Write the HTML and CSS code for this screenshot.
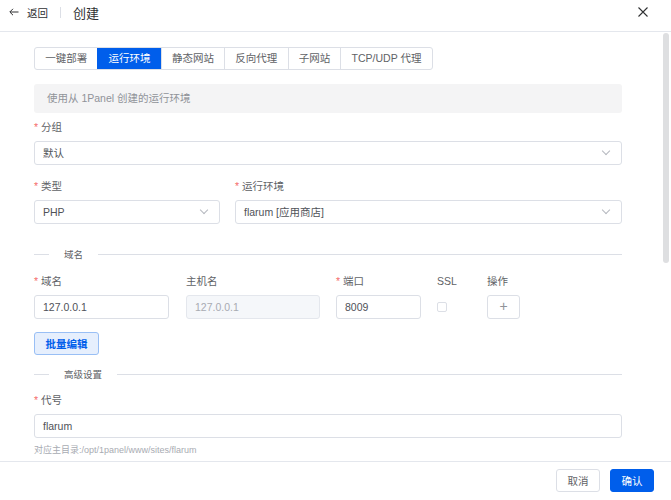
FILE: index.html
```html
<!DOCTYPE html>
<html lang="zh-CN">
<head>
    <meta charset="UTF-8">
    <meta name="viewport" content="width=device-width, initial-scale=1.0">
    <title>创建网站</title>
    <link rel="stylesheet" href="styles.css">
</head>
<body>

    <div class="drawer">
        <header class="drawer-header">
            <span class="back">
                <svg width="10" height="8" viewBox="0 0 10 8"><path d="M9.5 4H1M4 0.8L0.8 4L4 7.2" fill="none" stroke="#303133" stroke-width="1"/></svg>
                返回
            </span>
            <span class="sep"></span>
            <span class="title">创建</span>
            <svg class="close" width="10" height="10" viewBox="0 0 10 10"><path d="M0.5 0.5L9.5 9.5M9.5 0.5L0.5 9.5" stroke="#303133" stroke-width="1.1"/></svg>
        </header>

        <main class="drawer-body">
            <div class="tabs">
                <span class="tab">一键部署</span>
                <span class="tab active">运行环境</span>
                <span class="tab">静态网站</span>
                <span class="tab">反向代理</span>
                <span class="tab">子网站</span>
                <span class="tab">TCP/UDP 代理</span>
            </div>

            <div class="alert">使用从 1Panel 创建的运行环境</div>

            <div class="field first">
                <label class="label required">分组</label>
                <div class="select">默认</div>
            </div>

            <div class="field-row">
                <div class="field">
                    <label class="label required">类型</label>
                    <div class="select">PHP</div>
                </div>
                <div class="field">
                    <label class="label required">运行环境</label>
                    <div class="select">flarum [应用商店]</div>
                </div>
            </div>

            <div class="divider divider-domain"><span>域名</span></div>

            <div class="domain-row">
                <label class="label required">域名</label>
                <label class="label">主机名</label>
                <label class="label required">端口</label>
                <label class="label">SSL</label>
                <label class="label">操作</label>

                <div class="input w-domain">127.0.0.1</div>
                <div class="input disabled w-host">127.0.0.1</div>
                <div class="input w-port">8009</div>
                <div class="cell"><span class="checkbox"></span></div>
                <div class="cell"><span class="btn-icon">+</span></div>
            </div>

            <button class="btn-plain">批量编辑</button>

            <div class="divider divider-adv"><span>高级设置</span></div>

            <div class="field code-field">
                <label class="label required">代号</label>
                <div class="input">flarum</div>
            </div>
            <div class="help">对应主目录:/opt/1panel/www/sites/flarum</div>

            <div class="scroll-thumb"></div>
        </main>

        <footer class="drawer-footer">
            <button class="btn">取消</button>
            <button class="btn primary">确认</button>
        </footer>
    </div>

</body>
</html>
```

FILE: styles.css
```css
body {
    margin: 0;
    background-color: #ffffff;
    font-family: "Liberation Sans", "Noto Sans CJK SC", sans-serif;
    color: #606266;
}
.drawer {
    display: flex;
    flex-direction: column;
    height: 500px;
}

/* header */
.drawer-header {
    display: flex;
    align-items: center;
    height: 24px;
    padding: 0 0 7px 9px;
    border-bottom: 1px solid #e4e7ed;
}
.back {
    display: flex;
    align-items: center;
    gap: 8px;
    font-size: 10.5px;
    color: #303133;
}
.sep {
    width: 1px;
    height: 11px;
    background-color: #dcdfe6;
    margin: 0 12px 0 12px;
}
.title {
    font-size: 13px;
    color: #303133;
}
.close {
    margin-left: auto;
    margin-right: 23px;
}

/* body */
.drawer-body {
    flex: 1;
    position: relative;
    overflow: hidden;
    padding: 15px 49px 0 34px;
}
.scroll-thumb {
    position: absolute;
    top: 1px;
    right: 2px;
    width: 6px;
    height: 230px;
    border-radius: 3px;
    background-color: #dedfe1;
}

.tabs {
    display: inline-flex;
    border: 1px solid #dcdfe6;
    border-radius: 3px;
    overflow: hidden;
}
.tab {
    line-height: 21px;
    padding: 0 10.2px;
    font-size: 10.5px;
    color: #606266;
    border-left: 1px solid #dcdfe6;
}
.tab:first-child {
    border-left: none;
}
.tab.active {
    background-color: #005eeb;
    border-left-color: #005eeb;
    color: #ffffff;
}

.alert {
    margin-top: 14px;
    height: 29px;
    line-height: 29px;
    padding: 0 13px;
    border-radius: 3px;
    background-color: #f4f4f5;
    font-size: 10.5px;
    color: #909399;
}

.field.first {
    margin-top: 4px;
}
.field-row {
    display: grid;
    grid-template-columns: 186px 1fr;
    gap: 15px;
    margin-top: 11px;
}
.label {
    display: block;
    line-height: 20px;
    margin-bottom: 4px;
    font-size: 10.5px;
    color: #606266;
}
.label.required::before {
    content: "*";
    color: #f56c6c;
    margin-right: 3px;
}

.select,
.input {
    box-sizing: border-box;
    height: 24px;
    line-height: 22px;
    padding: 0 8px;
    border: 1px solid #dcdfe6;
    border-radius: 3px;
    font-size: 10.5px;
    color: #4f5258;
    background-color: #ffffff;
}
.select {
    position: relative;
}
.select::after {
    content: "";
    position: absolute;
    right: 12px;
    top: 6px;
    width: 5px;
    height: 5px;
    border-right: 1px solid #b5b8bf;
    border-bottom: 1px solid #b5b8bf;
    transform: rotate(45deg);
}
.input.disabled {
    background-color: #f5f7fa;
    border-color: #e4e7ed;
    color: #a8abb2;
}

.divider {
    display: flex;
    align-items: center;
    height: 14px;
    font-size: 9.5px;
    color: #606266;
}
.divider::before {
    content: "";
    width: 15px;
    height: 1px;
    background-color: #dcdfe6;
}
.divider::after {
    content: "";
    flex: 1;
    height: 1px;
    background-color: #dcdfe6;
}
.divider span {
    padding: 0 15px;
}
.divider-domain {
    margin-top: 23px;
}
.divider-adv {
    margin-top: 12px;
}

.domain-row {
    display: grid;
    grid-template-columns: 152px 150px 101px 50px auto;
    margin-top: 10px;
}
.w-domain { width: 135px; }
.w-host { width: 134px; }
.w-port { width: 85px; }
.cell {
    display: flex;
    align-items: center;
    height: 24px;
}
.checkbox {
    box-sizing: border-box;
    width: 10px;
    height: 10px;
    border: 1px solid #dcdfe6;
    border-radius: 2px;
}
.btn-icon {
    box-sizing: border-box;
    width: 33px;
    height: 24px;
    line-height: 21px;
    text-align: center;
    border: 1px solid #dcdfe6;
    border-radius: 3px;
    font-size: 14px;
    font-weight: 300;
    color: #909399;
}

button {
    font-family: inherit;
    cursor: pointer;
}
.btn-plain {
    display: block;
    margin-top: 13px;
    height: 23px;
    padding: 0 10.5px;
    border: 1px solid #99bff5;
    border-radius: 3px;
    background-color: #e6effd;
    color: #005eeb;
    font-size: 10.5px;
    font-weight: bold;
}

.code-field {
    margin-top: 9px;
}
.help {
    margin-top: 6px;
    line-height: 12px;
    font-size: 9px;
    color: #a8abb2;
}

/* footer */
.drawer-footer {
    display: flex;
    justify-content: flex-end;
    gap: 10px;
    height: 39px;
    padding: 7px 17px 0 0;
    box-sizing: border-box;
    border-top: 1px solid #e4e7ed;
}
.btn {
    height: 23px;
    padding: 0 10.5px;
    border: 1px solid #dcdfe6;
    border-radius: 3px;
    background-color: #ffffff;
    color: #606266;
    font-size: 10.5px;
}
.btn.primary {
    border-color: #005eeb;
    background-color: #005eeb;
    color: #ffffff;
}
```
